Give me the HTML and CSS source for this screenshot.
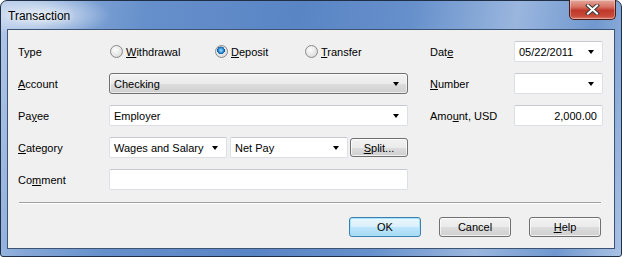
FILE: index.html
```html
<!DOCTYPE html>
<html lang="en">
<head>
<meta charset="UTF-8" />
<title>Transaction</title>
<link rel="stylesheet" href="styles.css">
</head>
<body>
<div class="window">
  <div class="titlebar">
    <span class="title">Transaction</span>
    <button class="close" aria-label="Close">
      <svg width="15" height="11" viewBox="0 0 15 11">
        <path d="M3 1.5 L12 9.5 M12 1.5 L3 9.5" stroke="#3a3a3a" stroke-width="4" stroke-linecap="square" />
        <path d="M3 1.5 L12 9.5 M12 1.5 L3 9.5" stroke="#fff" stroke-width="2" stroke-linecap="square" />
      </svg>
    </button>
  </div>

  <div class="client">
    <div class="form">
      <!-- row 1 -->
      <label class="lbl">Type</label>
      <div class="radios">
        <span class="radio r1"><i class="dot"></i><span><u>W</u>ithdrawal</span></span>
        <span class="radio r2"><i class="dot on"></i><span><u>D</u>eposit</span></span>
        <span class="radio r3"><i class="dot"></i><span><u>T</u>ransfer</span></span>
      </div>
      <span></span>
      <label class="lbl">Dat<u>e</u></label>
      <div class="field combo">05/22/2011<span class="arrow"></span></div>

      <!-- row 2 -->
      <label class="lbl"><u>A</u>ccount</label>
      <div class="dropbtn">Checking<span class="arrow"></span></div>
      <span></span>
      <label class="lbl"><u>N</u>umber</label>
      <div class="field combo"><span class="arrow"></span></div>

      <!-- row 3 -->
      <label class="lbl">Pa<u>y</u>ee</label>
      <div class="field combo">Employer<span class="arrow"></span></div>
      <span></span>
      <label class="lbl">Amo<u>u</u>nt, USD</label>
      <div class="field amount">2,000.00</div>

      <!-- row 4 -->
      <label class="lbl"><u>C</u>ategory</label>
      <div class="catrow">
        <div class="field combo cat">Wages and Salary<span class="arrow"></span></div>
        <div class="field combo cat">Net Pay<span class="arrow"></span></div>
        <button class="btn split"><u>S</u>plit...</button>
      </div>
      <span></span>
      <span></span>
      <span></span>

      <!-- row 5 -->
      <label class="lbl">Co<u>m</u>ment</label>
      <div class="field"></div>
    </div>

    <div class="sep"></div>

    <div class="buttons">
      <button class="btn default">OK</button>
      <button class="btn">Cancel</button>
      <button class="btn"><u>H</u>elp</button>
    </div>
  </div>
</div>
</body>
</html>
```

FILE: styles.css
```css
* {
  box-sizing: border-box;
}
body {
  margin: 0;
  font-family: 'Liberation Sans', Arial, sans-serif;
  font-size: 11px;
  color: #000;
  background: #fff;
}
u {
  text-decoration: underline;
  text-underline-offset: 1px;
}

/* window frame */
.window {
  width: 622px;
  height: 257px;
  border: 1px solid #1f2f45;
  border-radius: 7px 7px 3px 3px;
  padding: 0 6px 7px 6px;
  background:
    radial-gradient(ellipse 70px 22px at 40px 14px, rgba(255,255,255,0.75), rgba(255,255,255,0) 100%),
    linear-gradient(100deg, #b2c8e8 0%, #86a8d8 10%, #6690cb 22%, #5a85c5 45%, #6690cb 62%, #9ab6de 78%, #7098cf 90%, #a9c2e4 100%);
  display: flex;
  flex-direction: column;
}
.titlebar {
  height: 28px;
  display: flex;
  align-items: flex-start;
  justify-content: space-between;
}
.title {
  font-size: 12px;
  margin-top: 8px;
  margin-left: 1px;
  color: #000;
  text-shadow: 0 0 6px #fff;
}
.close {
  width: 47px;
  height: 20px;
  margin-top: -1px;
  margin-right: -1px;
  border: 1px solid #4a1c18;
  border-top: none;
  border-radius: 0 0 5px 5px;
  background: linear-gradient(#e6a69c 0%, #d77565 35%, #c0392b 55%, #c84a39 85%, #dc7a68 100%);
  box-shadow: inset 0 0 0 1px rgba(255,255,255,0.35);
  padding: 0;
  display: flex;
  align-items: center;
  justify-content: center;
}

/* client area */
.client {
  flex: 1;
  background: #f0f0f0;
  border: 1px solid #3d5373;
  padding: 11px 13px 0 10px;
  display: flex;
  flex-direction: column;
}
.form {
  display: grid;
  grid-template-columns: 91px 299px 22px 84px 89px;
  grid-template-rows: repeat(5, 21px);
  row-gap: 11px;
  align-items: center;
}
.lbl {
  padding-top: 1px;
}
.radios {
  position: relative;
  height: 21px;
}
.radio {
  position: absolute;
  top: 4px;
  display: flex;
  align-items: center;
  gap: 3px;
}
.r1 { left: 1px; }
.r2 { left: 106px; }
.r3 { left: 196px; }
.dot {
  width: 13px;
  height: 13px;
  border-radius: 50%;
  border: 1px solid #8a8a8a;
  background: radial-gradient(circle at 40% 35%, #fdfdfd 0%, #e4e4e4 60%, #c9c9c9 100%);
  display: inline-block;
}
.dot.on {
  background:
    radial-gradient(circle at 45% 40%, #9fe0ff 0%, #2e8ed6 28%, #0f4f8f 42%, rgba(0,0,0,0) 45%),
    radial-gradient(circle at 40% 35%, #fdfdfd 0%, #e4e4e4 60%, #c9c9c9 100%);
}

.field {
  height: 21px;
  background: #fff;
  border: 1px solid #dcdfe3;
  border-top-color: #c5c9cf;
  border-radius: 2px;
  padding: 0 4px;
  display: flex;
  align-items: center;
  justify-content: space-between;
}
.amount {
  justify-content: flex-end;
  padding-right: 5px;
}
.arrow {
  width: 0;
  height: 0;
  border-top: 4px solid #000;
  border-left: 3.5px solid transparent;
  border-right: 3.5px solid transparent;
  margin-right: 4px;
  margin-left: auto;
}
.dropbtn {
  height: 21px;
  border: 1px solid #707070;
  border-radius: 3px;
  background: linear-gradient(#f2f2f2 0%, #ebebeb 50%, #dddddd 51%, #cfcfcf 100%);
  box-shadow: inset 0 0 0 1px rgba(255,255,255,0.6);
  padding: 0 4px;
  display: flex;
  align-items: center;
}

.catrow {
  display: flex;
  align-items: center;
  height: 21px;
}
.cat {
  width: 118px;
  margin-right: 3px;
}
.cat + .cat {
  margin-right: 2px;
}

.btn {
  font-family: 'Liberation Sans', Arial, sans-serif;
  font-size: 11px;
  color: #000;
  height: 20px;
  border: 1px solid #707070;
  border-radius: 3px;
  background: linear-gradient(#f2f2f2 0%, #ebebeb 50%, #dddddd 51%, #cfcfcf 100%);
  box-shadow: inset 0 0 0 1px rgba(255,255,255,0.7);
  padding: 0;
}
.split {
  width: 58px;
  height: 19px;
}
.btn.default {
  border-color: #3c7fb1;
  background: linear-gradient(#eaf6fd 0%, #d9f0fc 50%, #bee6fd 51%, #a7d9f5 100%);
  box-shadow: inset 0 0 0 1px #a6e2f8;
}

.sep {
  margin: 12px 0 0 1px;
  width: 582px;
  height: 2px;
  border-top: 1px solid #a0a0a0;
  border-bottom: 1px solid #fff;
}
.buttons {
  display: flex;
  justify-content: flex-end;
  gap: 18px;
  margin-top: 13px;
}
.buttons .btn {
  width: 72px;
}
```
